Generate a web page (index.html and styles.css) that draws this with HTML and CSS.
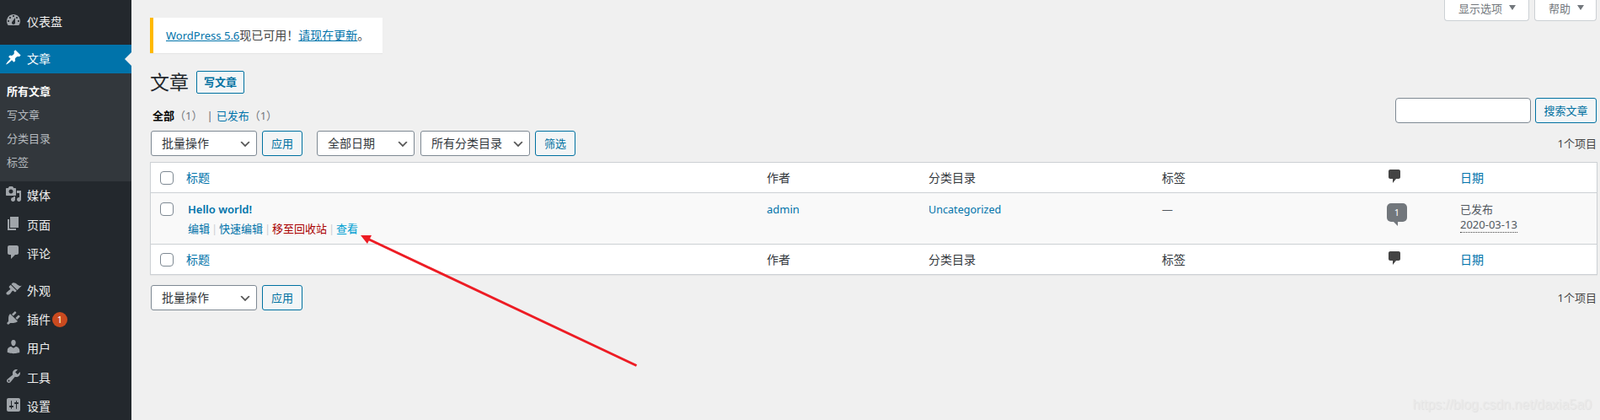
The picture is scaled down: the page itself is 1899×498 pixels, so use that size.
FILE: index.html
```html
<!DOCTYPE html>
<html lang="zh-CN">
<head>
<meta charset="utf-8">
<title>文章</title>
<link rel="stylesheet" href="styles.css">
</head>
<body>
<div class="wrap">
<nav class="side">
  <ul class="menu">
    <li class="item"><svg class="ic" viewBox="0 0 20 20"><path fill-rule="evenodd" d="M3.76 16h12.48c1.1-1.37 1.76-3.11 1.76-5 0-4.42-3.58-8-8-8s-8 3.58-8 8c0 1.89.66 3.63 1.76 5zM10 4c.55 0 1 .45 1 1s-.45 1-1 1-1-.45-1-1 .45-1 1-1zM6 6c.55 0 1 .45 1 1s-.45 1-1 1-1-.45-1-1 .45-1 1-1zm8 0c.55 0 1 .45 1 1s-.45 1-1 1-1-.45-1-1 .45-1 1-1zm-5.37 5.55L12 7v6c0 1.1-.9 2-2 2s-2-.9-2-2c0-.57.24-1.08.63-1.45zM4 10c.55 0 1 .45 1 1s-.45 1-1 1-1-.45-1-1 .45-1 1-1zm12 0c.55 0 1 .45 1 1s-.45 1-1 1-1-.45-1-1 .45-1 1-1z"/></svg>仪表盘</li>
    <li class="item active sep"><svg class="ic" viewBox="0 0 20 20"><path d="M10.44 3.02l1.82-1.82 6.36 6.35-1.83 1.82c-1.05-.68-2.48-.57-3.41.36l-.75.75c-.92.93-1.04 2.35-.35 3.41l-1.83 1.82-2.41-2.41-2.8 2.79c-.42.42-3.38 2.71-3.8 2.29s1.86-3.39 2.28-3.81l2.79-2.79L4.1 9.36l1.83-1.82c1.05.69 2.48.57 3.4-.36l.75-.75c.93-.92 1.05-2.35.36-3.41z"/></svg>文章</li>
    <li class="sub">
      <div class="subitem current">所有文章</div>
      <div class="subitem">写文章</div>
      <div class="subitem">分类目录</div>
      <div class="subitem">标签</div>
    </li>
    <li class="item"><svg class="ic" viewBox="0 0 20 20"><path fill-rule="evenodd" d="M13 11V4c0-.55-.45-1-1-1h-1.67L9 1H5L3.67 3H2c-.55 0-1 .45-1 1v7c0 .55.45 1 1 1h10c.55 0 1-.45 1-1zM7 4.5c1.38 0 2.5 1.12 2.5 2.5S8.38 9.5 7 9.5 4.5 8.38 4.5 7 5.62 4.5 7 4.5zM14 6h5v10.5c0 1.38-1.12 2.5-2.5 2.5S14 17.88 14 16.5s1.12-2.5 2.5-2.5c.17 0 .34.02.5.05V9h-3V6zm-4 8.05V13h2v3.5c0 1.38-1.12 2.5-2.5 2.5S7 17.88 7 16.5 8.12 14 9.5 14c.17 0 .34.02.5.05z"/></svg>媒体</li>
    <li class="item"><svg class="ic" viewBox="0 0 20 20"><path d="M6 15V2h10v13H6zm-1 1h8v2H3V5h2v11z"/></svg>页面</li>
    <li class="item"><svg class="ic" viewBox="0 0 20 20"><path d="M5 2h9c1.1 0 2 .9 2 2v7c0 1.1-.9 2-2 2h-2l-5 5v-5H5c-1.1 0-2-.9-2-2V4c0-1.1.9-2 2-2z"/></svg>评论</li>
    <li class="item sep"><svg class="ic" viewBox="0 0 20 20"><path d="M14.48 11.06L7.41 3.99l1.5-1.5c.5-.56 2.3-.47 3.51.32 1.21.8 1.43 1.28 2.91 2.1 1.18.64 2.45 1.26 4.45.85zm-.71.71L6.7 4.7 4.93 6.47c-.39.39-.39 1.02 0 1.41l1.06 1.06c.39.39.39 1.03 0 1.42-.6.6-1.43 1.11-2.21 1.69-.35.26-.7.53-1.01.84C1.43 13.23.91 15 2 16c1.09 1.1 2.77.56 4.11-.79.31-.31.58-.66.84-1.01.58-.78 1.09-1.61 1.69-2.21.39-.39 1.03-.39 1.42 0l1.06 1.06c.39.39 1.02.39 1.41 0z"/></svg>外观</li>
    <li class="item"><svg class="ic" viewBox="0 0 20 20"><path d="M13.11 4.36L9.87 7.6 8 5.73l3.24-3.24c.35-.34 1.05-.2 1.56.32.52.51.66 1.21.31 1.55zm-8 1.77l.91-1.12 9.01 9.01-1.19.84c-.71.71-2.63 1.16-3.82 1.16H6.14L4.9 17.26c-.59.59-1.54.59-2.12 0-.59-.58-.59-1.53 0-2.12l1.24-1.24v-3.88c0-1.13.4-3.19 1.09-3.89zm7.26 3.97l3.24-3.24c.34-.35 1.04-.21 1.55.31.52.51.66 1.21.31 1.55l-3.24 3.25z"/></svg>插件<span class="badge">1</span></li>
    <li class="item"><svg class="ic" viewBox="0 0 20 20"><path d="M10 9.25c-2.27 0-2.73-3.44-2.73-3.44C7 4.02 7.82 2 9.97 2c2.16 0 2.98 2.02 2.71 3.81 0 0-.41 3.44-2.68 3.44zm0 2.57L12.72 10c2.39 0 4.52 2.33 4.52 4.53v2.49s-3.65 1.13-7.24 1.13c-3.65 0-7.24-1.13-7.24-1.13v-2.49c0-2.25 1.94-4.48 4.47-4.48z"/></svg>用户</li>
    <li class="item"><svg class="ic" viewBox="0 0 20 20"><path fill-rule="evenodd" d="M16.68 9.77c-1.34 1.34-3.3 1.67-4.95.99l-5.41 6.52c-.99.99-2.59.99-3.58 0s-.99-2.59 0-3.57l6.52-5.42c-.68-1.65-.35-3.61.99-4.95 1.28-1.28 3.12-1.62 4.72-1.06l-2.89 2.89 2.82 2.82 2.86-2.87c.53 1.58.18 3.39-1.08 4.65zM3.81 16.21c.4.39 1.04.39 1.43 0 .4-.4.4-1.04 0-1.43-.39-.4-1.03-.4-1.43 0-.39.39-.39 1.03 0 1.43z"/></svg>工具</li>
    <li class="item"><svg class="ic" viewBox="0 0 20 20"><path fill-rule="evenodd" d="M18 16V4c0-1.1-.9-2-2-2H4c-1.1 0-2 .9-2 2v12c0 1.1.9 2 2 2h12c1.1 0 2-.9 2-2zM8 11h1c.55 0 1 .45 1 1s-.45 1-1 1H8v1.5c0 .28-.22.5-.5.5s-.5-.22-.5-.5V13H6c-.55 0-1-.45-1-1s.45-1 1-1h1V5.5c0-.28.22-.5.5-.5s.5.22.5.5V11zm5-2h-1c-.55 0-1-.45-1-1s.45-1 1-1h1V5.5c0-.28.22-.5.5-.5s.5.22.5.5V7h1c.55 0 1 .45 1 1s-.45 1-1 1h-1v5.5c0 .28-.22.5-.5.5s-.5-.22-.5-.5V9z"/></svg>设置</li>
  </ul>
</nav>
<main class="content">
  <div class="meta">
    <div class="metabtn metawide">显示选项<i class="caret"></i></div>
    <div class="metabtn">帮助<i class="caret"></i></div>
  </div>
  <div class="notice"><a class="wp" href="#">WordPress 5.6</a>现已可用！<a href="#">请现在更新</a>。</div>
  <div class="headrow">
    <h1 class="title">文章</h1>
    <a class="addnew" href="#">写文章</a>
  </div>
  <div class="subrow">
    <ul class="subsub">
      <li class="strong">全部<span class="count">（1）</span></li>
      <li class="pipe">|</li>
      <li><a class="plain" href="#">已发布</a><span class="count">（1）</span></li>
    </ul>
    <div class="search">
      <input class="searchbox" type="search" aria-label="搜索文章">
      <button class="btn">搜索文章</button>
    </div>
  </div>
  <div class="nav navtop">
    <select class="sel w-bulk"><option>批量操作</option></select>
    <button class="btn w-apply">应用</button>
    <select class="sel w-date spaced"><option>全部日期</option></select>
    <select class="sel w-cat"><option>所有分类目录</option></select>
    <button class="btn w-apply">筛选</button>
    <span class="items">1个项目</span>
  </div>
  <table class="posts">
    <colgroup><col class="c1"><col class="c2"><col class="c3"><col class="c4"><col class="c5"><col class="c6"><col class="c7"></colgroup>
    <thead>
      <tr class="hrow">
        <td class="cb"><input class="check" type="checkbox" aria-label="全选"></td>
        <th><a class="plain" href="#">标题</a></th>
        <th>作者</th>
        <th>分类目录</th>
        <th>标签</th>
        <th class="cmt"><svg class="cmticon" viewBox="0 0 20 20"><path d="M5 2h10c1.1 0 2 .9 2 2v7c0 1.1-.9 2-2 2h-3l-4 5v-5H5c-1.1 0-2-.9-2-2V4c0-1.1.9-2 2-2z"/></svg></th>
        <th class="datehead"><a class="plain" href="#">日期</a></th>
      </tr>
    </thead>
    <tbody>
      <tr class="brow">
        <td class="cb cbbody"><input class="check" type="checkbox" aria-label="选择"></td>
        <td class="tc">
          <a class="ptitle" href="#">Hello world!</a>
          <div class="actions"><a href="#">编辑</a><span class="bar">|</span><a href="#">快速编辑</a><span class="bar">|</span><a class="trash" href="#">移至回收站</a><span class="bar">|</span><a class="view" href="#">查看</a></div>
        </td>
        <td class="bc"><a href="#">admin</a></td>
        <td class="bc"><a class="cat" href="#">Uncategorized</a></td>
        <td class="bc">—</td>
        <td class="bc cmt"><span class="bubble">1</span></td>
        <td class="bc datecell">已发布<br><span class="dotted">2020-03-13</span></td>
      </tr>
    </tbody>
    <tfoot>
      <tr class="frow">
        <td class="cb"><input class="check" type="checkbox" aria-label="全选"></td>
        <th><a class="plain" href="#">标题</a></th>
        <th>作者</th>
        <th>分类目录</th>
        <th>标签</th>
        <th class="cmt"><svg class="cmticon" viewBox="0 0 20 20"><path d="M5 2h10c1.1 0 2 .9 2 2v7c0 1.1-.9 2-2 2h-3l-4 5v-5H5c-1.1 0-2-.9-2-2V4c0-1.1.9-2 2-2z"/></svg></th>
        <th class="datehead"><a class="plain" href="#">日期</a></th>
      </tr>
    </tfoot>
  </table>
  <div class="nav navbottom">
    <select class="sel w-bulk"><option>批量操作</option></select>
    <button class="btn w-apply">应用</button>
    <span class="items">1个项目</span>
  </div>
</main>
</div>
<svg class="arrow" width="1899" height="498" viewBox="0 0 1899 498" aria-hidden="true">
  <line x1="755.5" y1="433.5" x2="434" y2="282" stroke="#ed1c24" stroke-width="3"/>
  <polygon points="428,279 441,279 436,289" fill="#ed1c24"/>
</svg>
<div class="mark">https://blog.csdn.net/daxia5a0</div>
</body>
</html>
```
FILE: styles.css
```css
* { box-sizing: border-box; }
html, body { margin: 0; height: 498px; overflow: hidden; }
body {
  background: #f0f0f0;
  color: #444;
  font: 13px/18px "Noto Sans", "Noto Sans CJK SC", sans-serif;
  position: relative;
}
a { color: #0073aa; text-decoration: none; }
ul { list-style: none; margin: 0; padding: 0; }

.wrap { display: flex; height: 498px; }

/* sidebar */
.side { width: 156px; flex: none; background: #23282d; color: #eee; padding-top: 9px; overflow: hidden; }
.item {
  display: flex; align-items: center;
  height: 34.2px; padding-left: 6px;
  font-size: 14px; line-height: 18px;
  color: #eee; position: relative;
}
.item.sep { margin-top: 10px; }
.ic { width: 20px; height: 20px; margin-right: 6px; flex: none; fill: #a0a5aa; position: relative; top: -2px; }
.active { background: #0073aa; color: #fff; }
.active .ic { fill: #fff; }
.active::after {
  content: ""; position: absolute; right: 0; top: 9px;
  border: 8px solid transparent; border-right-color: #f0f0f0; border-left-width: 0;
}
.sub { background: #32373c; padding: 7px 0 9px; height: 128px; }
.subitem { height: 28px; line-height: 28px; padding-left: 8px; color: rgba(240,245,250,.7); font-size: 13px; }
.subitem.current { color: #fff; font-weight: 700; }
.badge {
  width: 18px; height: 18px; border-radius: 50%;
  background: #ca4a1f; color: #fff;
  font-size: 11px; line-height: 18px; text-align: center; margin-left: 2px;
}

/* content */
.content { flex: 1; min-width: 0; padding: 21px 4px 0 22px; position: relative; }
.meta { float: right; display: flex; gap: 6px; margin-top: -21px; }
.metabtn {
  width: 74px; height: 25px; padding-left: 16px;
  background: #fff; border: 1px solid #ccd0d4; border-top: 0;
  border-radius: 0 0 4px 4px; color: #72777c; font-size: 13px; line-height: 21px;
  display: flex; align-items: flex-start;
}
.metawide { width: 101px; }
.caret {
  border: 4.5px solid transparent; border-top: 6px solid #72777c; border-bottom: 0;
  margin: 6px 0 0 8px;
}
.notice {
  width: 276px; height: 42px; background: #fff; border-left: 4px solid #ffb900;
  box-shadow: 0 1px 1px rgba(0,0,0,.04); padding: 12px 0 0 15px; font-size: 14px; line-height: 18px; white-space: nowrap;
}
.notice a { text-decoration: underline; }
.notice .wp { font-size: 13px; }
.headrow { display: flex; align-items: center; height: 27px; margin-top: 21px; }
.title { margin: 0 9px 0 0; font-size: 23px; line-height: 27px; font-weight: 400; color: #23282d; }
.addnew {
  width: 57px; height: 27px; border: 1px solid #0071a1; border-radius: 2px;
  background: #f3f5f6; color: #0071a1; font-size: 13px; font-weight: 700; line-height: 25px; text-align: center;
}
.subrow { display: flex; justify-content: space-between; height: 30px; margin-top: 5px; }
.subsub { display: flex; align-items: flex-start; padding: 12px 0 0 3px; font-size: 13px; color: #646970; }
.strong { color: #000; font-weight: 700; }
.count { color: #72777c; font-weight: 400; }
.pipe { margin: 0 4px 0 5px; }
.plain { color: #0073aa; }
.search { display: flex; gap: 5px; }
.searchbox { width: 161px; height: 30px; border: 1px solid #7e8993; border-radius: 4px; background: #fff; margin: 0; }
.btn {
  height: 30px; padding: 0; border: 1px solid #0071a1; border-radius: 3px;
  background: #f3f5f6; color: #0071a1; font: 13px/28px "Noto Sans", "Noto Sans CJK SC", sans-serif; width: 73px;
}
.nav { display: flex; align-items: center; height: 30px; padding-left: 1px; gap: 6px; }
.navtop { margin-top: 9px; }
.navbottom { margin-top: 12px; }
.sel {
  height: 30px; margin: 0; padding: 0 24px 0 12px;
  font: 14px/28px "Noto Sans", "Noto Sans CJK SC", sans-serif; color: #32373c;
  border: 1px solid #7e8993; border-radius: 3px; appearance: none; -webkit-appearance: none;
  background: #fff url("data:image/svg+xml,%3Csvg xmlns='http://www.w3.org/2000/svg' width='20' height='20'%3E%3Cpath d='M5 6l5 5 5-5 2 1-7 7-7-7z' fill='%23555'/%3E%3C/svg%3E") no-repeat right 5px top 55%;
  background-size: 16px 16px;
}
.w-bulk { width: 126px; }
.w-apply { width: 48px; }
.w-date { width: 116px; }
.spaced { margin-left: 11px; }
.w-cat { width: 130px; margin-left: 1px; }
.items { margin-left: auto; color: #444; font-size: 13px; }

/* table */
.posts {
  width: 100%; table-layout: fixed; border-collapse: separate; border-spacing: 0;
  background: #fff; border: 1px solid #ccd0d4; margin-top: 7px;
  box-shadow: 0 1px 1px rgba(0,0,0,.04);
}
.c1 { width: 34px; } .c2 { width: 687px; } .c3 { width: 192px; } .c4 { width: 277px; }
.c5 { width: 261px; } .c6 { width: 93px; } .c7 { width: 172px; }
th {
  text-align: left; font-weight: 400; font-size: 14px; line-height: 18px; color: #32373c; padding: 0 10px;
}
th:nth-child(2) { padding-left: 8px; }
.hrow { height: 36px; }
.hrow th, .hrow td { border-bottom: 1px solid #ccd0d4; }
.frow { height: 36px; }
.frow th, .frow td { border-top: 1px solid #ccd0d4; }
.cb { padding: 0 0 0 11px; vertical-align: middle; line-height: 0; }
.cbbody { vertical-align: top; padding-top: 11px; }
.check {
  appearance: none; -webkit-appearance: none; width: 16px; height: 16px; margin: 0;
  border: 1px solid #7e8993; border-radius: 4px; background: #fff;
}
.brow { background: #f9f9f9; height: 60px; }
.bc { vertical-align: top; padding: 10px 10px 0; font-size: 13px; line-height: 18px; color: #50575e; }
.tc { vertical-align: top; padding: 10px 10px 0; }
.ptitle { font-size: 13px; line-height: 18px; font-weight: 600; display: block; }
.actions { margin-top: 5px; font-size: 13px; line-height: 18px; white-space: nowrap; }
.bar { color: #ccd0d4; display: inline-block; width: 11px; text-align: center; }
.trash { color: #a00; }
.view { color: #00a0d2; }
.cat { font-size: 12.6px; }
.cmt { padding-left: 16px; }
.cmticon { width: 20px; height: 20px; fill: #444; display: block; margin: -4px 0 0 -1px; }
.bubble {
  display: block; width: 24px; height: 22px; margin: 2px 0 0 0; border-radius: 5px;
  background: #72777c; color: #fff; font-size: 11px; line-height: 22px; text-align: center; position: relative;
}
.bubble::after {
  content: ""; position: absolute; left: 8px; top: 22px;
  border-top: 5px solid #72777c; border-left: 5px solid transparent;
}
.datecell { color: #50575e; }
.dotted { border-bottom: 1px dotted #444; display: inline-block; line-height: 17px; }

/* overlays */
.arrow { position: absolute; left: 0; top: 0; pointer-events: none; }
.mark {
  position: absolute; right: 10px; top: 470px;
  font: 16px/20px "Liberation Sans", sans-serif; color: #eaeaea; text-shadow: 1px 1px 1px #e0e0e0;
}
```
